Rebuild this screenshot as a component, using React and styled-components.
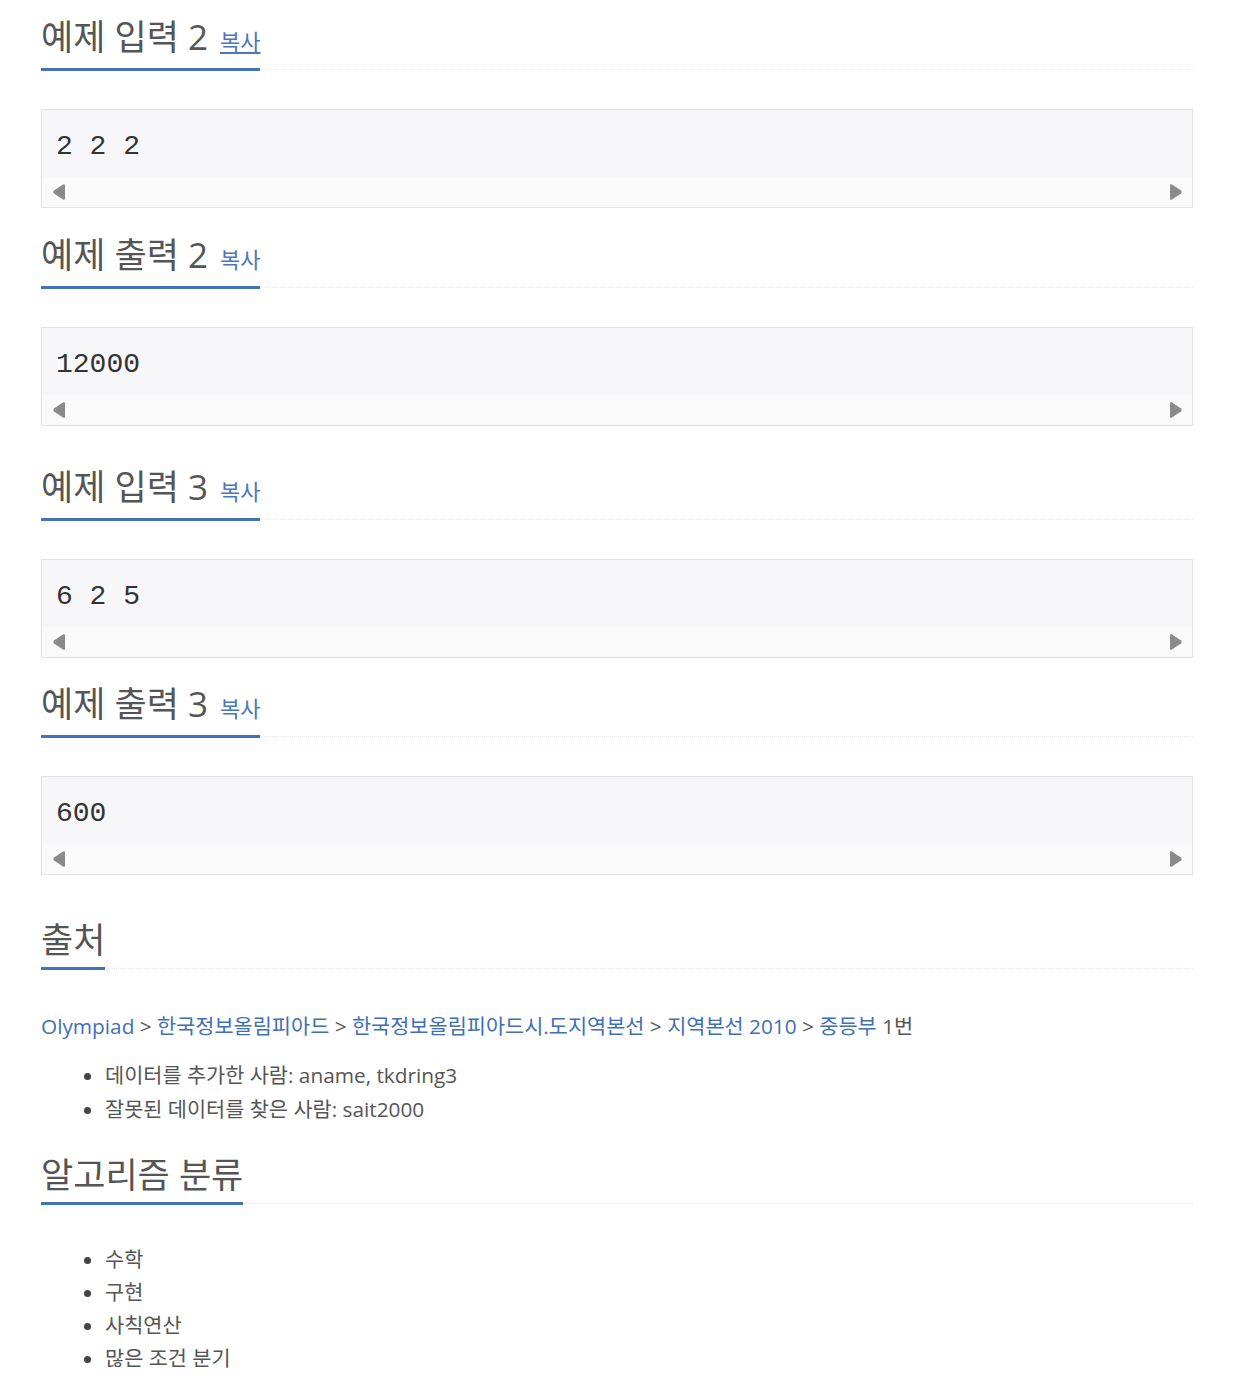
import React from 'react';
import styled, { createGlobalStyle } from 'styled-components';

const GlobalStyle = createGlobalStyle`
    body {
        margin: 0;
        background: #fff;
        font-family: 'Open Sans', 'Noto Sans CJK KR', sans-serif;
        color: #555;
    }
`;

const Page = styled.div`
    width: 1152px;
    padding: 10px 0 0 41px;
`;

const Section = styled.section`
    margin-bottom: ${(props) => props.gap || 19}px;
`;

const Headline = styled.div`
    border-bottom: 1px dotted #e4e9f0;
    margin-bottom: ${(props) => props.space || 39}px;
`;

const H2 = styled.h2`
    display: inline-block;
    margin: 0 0 -2px 0;
    padding: 7px 0 7px 0;
    border-bottom: 3px solid #4472b8;
    font-size: 35px;
    line-height: 40px;
    font-weight: 400;
    color: #555;
`;

const CopyLink = styled.a`
    font-size: 22px;
    color: #4a76bb;
    margin-left: 12px;
    text-decoration: ${(props) => (props.hover ? 'underline' : 'none')};
    cursor: pointer;
`;

const Pre = styled.div`
    border: 1px solid #e1e1e8;
    background: #f7f7f9;
`;

const PreText = styled.div`
    height: 67px;
    box-sizing: border-box;
    padding: 6px 14px 0 14px;
    display: flex;
    align-items: center;
    font-family: 'Liberation Mono', 'DejaVu Sans Mono', monospace;
    font-size: 28px;
    color: #333;
    white-space: pre;
`;

const ScrollBar = styled.div`
    height: 30px;
    background: #fafafa;
    display: flex;
    align-items: center;
    justify-content: space-between;
    padding: 0 9px 0 10px;
`;

const Arrow = styled.svg`
    width: 14px;
    height: 18px;
    fill: #8a8a8a;
`;

const Breadcrumb = styled.div`
    font-size: 20.8px;
    line-height: 34px;
    color: #555;
`;

const Link = styled.a`
    color: #3f6fb5;
    text-decoration: none;
`;

const List = styled.ul`
    margin: ${(props) => props.top || 0}px 0 0 0;
    padding-left: 64px;
    font-size: 20.8px;
    line-height: 33px;
    color: #555;

    li {
        line-height: ${(props) => props.row || 33}px;
    }

    li::marker {
        color: #444;
    }
`;

function SampleBox({ text }) {
    return (
        <Pre>
            <PreText>{text}</PreText>
            <ScrollBar>
                <Arrow viewBox="0 0 14 18">
                    <path d="M13 2.5 Q13 0.5 11 1.6 L2 7.6 Q0.5 9 2 10.4 L11 16.4 Q13 17.5 13 15.5 Z" />
                </Arrow>
                <Arrow viewBox="0 0 14 18">
                    <path d="M1 2.5 Q1 0.5 3 1.6 L12 7.6 Q13.5 9 12 10.4 L3 16.4 Q1 17.5 1 15.5 Z" />
                </Arrow>
            </ScrollBar>
        </Pre>
    );
}

function Sample({ title, text, hover, gap }) {
    return (
        <Section gap={gap}>
            <Headline>
                <H2>
                    {title}
                    <CopyLink hover={hover}>복사</CopyLink>
                </H2>
            </Headline>
            <SampleBox text={text} />
        </Section>
    );
}

export default function App() {
    return (
        <>
            <GlobalStyle />
            <Page>
                <Sample title="예제 입력 2" text="2 2 2" hover gap={20} />
                <Sample title="예제 출력 2" text="12000" gap={34} />
                <Sample title="예제 입력 3" text="6 2 5" gap={19} />
                <Sample title="예제 출력 3" text="600" gap={38} />
                <Section gap={22}>
                    <Headline space={40}>
                        <H2>출처</H2>
                    </Headline>
                    <Breadcrumb>
                        <Link>Olympiad</Link> &gt; <Link>한국정보올림피아드</Link> &gt;{' '}
                        <Link>한국정보올림피아드시.도지역본선</Link> &gt;{' '}
                        <Link>지역본선 2010</Link> &gt; <Link>중등부</Link> 1번
                    </Breadcrumb>
                    <List top={15} row={34}>
                        <li>데이터를 추가한 사람: aname, tkdring3</li>
                        <li>잘못된 데이터를 찾은 사람: sait2000</li>
                    </List>
                </Section>
                <Section>
                    <Headline space={39}>
                        <H2>알고리즘 분류</H2>
                    </Headline>
                    <List>
                        <li>수학</li>
                        <li>구현</li>
                        <li>사칙연산</li>
                        <li>많은 조건 분기</li>
                    </List>
                </Section>
            </Page>
        </>
    );
}
